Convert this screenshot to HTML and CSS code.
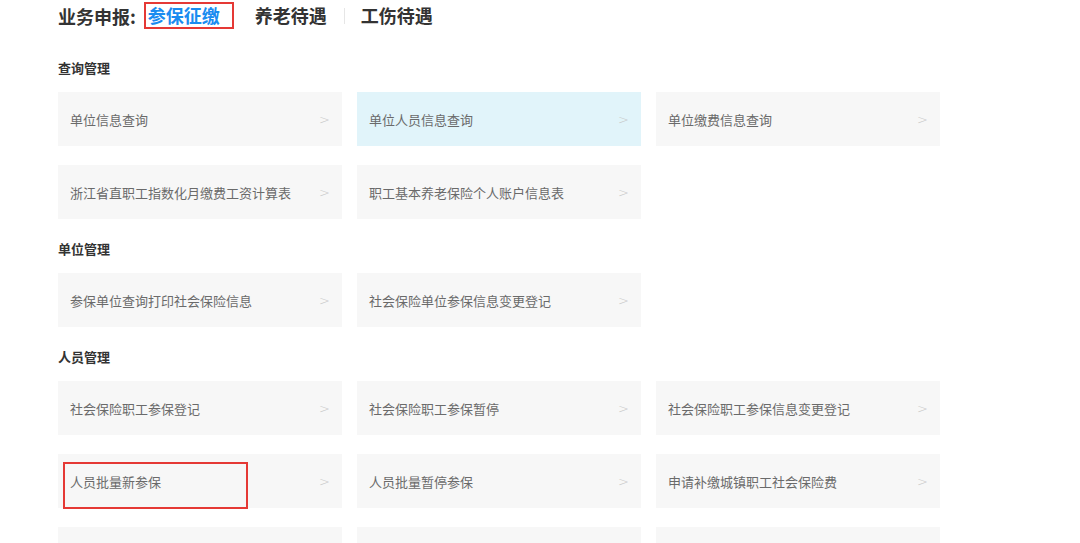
FILE: index.html
```html
<!DOCTYPE html>
<html lang="zh-CN">
<head>
    <meta charset="UTF-8">
    <meta name="viewport" content="width=device-width, initial-scale=1.0">
    <title>业务申报</title>
    <link rel="stylesheet" href="styles.css">
</head>
<body>
    <div class="container">
        <div class="tabs">
            <span class="tabs-label">业务申报:</span>
            <span class="tab active">参保征缴</span>
            <span class="tab">养老待遇</span>
            <span class="tab-sep"></span>
            <span class="tab">工伤待遇</span>
        </div>

        <!-- 查询管理 -->
        <div class="section">
            <h3 class="section-title">查询管理</h3>
            <div class="card-grid">
                <a class="card">单位信息查询<span class="arrow">&gt;</span></a>
                <a class="card card-hover">单位人员信息查询<span class="arrow">&gt;</span></a>
                <a class="card">单位缴费信息查询<span class="arrow">&gt;</span></a>
                <a class="card">浙江省直职工指数化月缴费工资计算表<span class="arrow">&gt;</span></a>
                <a class="card">职工基本养老保险个人账户信息表<span class="arrow">&gt;</span></a>
            </div>
        </div>

        <!-- 单位管理 -->
        <div class="section">
            <h3 class="section-title">单位管理</h3>
            <div class="card-grid">
                <a class="card">参保单位查询打印社会保险信息<span class="arrow">&gt;</span></a>
                <a class="card">社会保险单位参保信息变更登记<span class="arrow">&gt;</span></a>
            </div>
        </div>

        <!-- 人员管理 -->
        <div class="section">
            <h3 class="section-title">人员管理</h3>
            <div class="card-grid">
                <a class="card">社会保险职工参保登记<span class="arrow">&gt;</span></a>
                <a class="card">社会保险职工参保暂停<span class="arrow">&gt;</span></a>
                <a class="card">社会保险职工参保信息变更登记<span class="arrow">&gt;</span></a>
                <a class="card">人员批量新参保<span class="arrow">&gt;</span><span class="mark"></span></a>
                <a class="card">人员批量暂停参保<span class="arrow">&gt;</span></a>
                <a class="card">申请补缴城镇职工社会保险费<span class="arrow">&gt;</span></a>
                <a class="card">&nbsp;</a>
                <a class="card">&nbsp;</a>
                <a class="card">&nbsp;</a>
            </div>
        </div>
    </div>
</body>
</html>
```

FILE: styles.css
```css
* { box-sizing: border-box; }

body {
    font-family: "Microsoft YaHei", "Noto Sans CJK SC", "Noto Sans", sans-serif;
    margin: 0;
    background: #fff;
    color: #333;
}

.container {
    padding: 0 0 0 58px;
}

.tabs {
    display: flex;
    align-items: center;
    height: 30px;
    padding-top: 1px;
    font-size: 18px;
    font-weight: bold;
    color: #333;
}

.tabs-label {
    margin-right: 8px;
}

.tab {
    line-height: 23px;
    margin-right: 21px;
}

.tab.active {
    color: #1a8cf0;
    border: 2px solid #e53935;
    padding: 0 12px 0 2px;
}

.tab-sep {
    width: 1px;
    height: 16px;
    background: #e6e6e6;
    margin: 0 16px 0 -4px;
}

.section {
    margin-top: 28px;
}

.section + .section {
    margin-top: 20px;
}

.section-title {
    margin: 0 0 14px;
    font-size: 13px;
    line-height: 20px;
    font-weight: bold;
    color: #333;
}

.card-grid {
    display: grid;
    grid-template-columns: repeat(3, 284px);
    column-gap: 15px;
    row-gap: 19px;
}

.card {
    position: relative;
    display: flex;
    align-items: center;
    justify-content: space-between;
    height: 54px;
    padding: 0 12px;
    background: #f7f7f7;
    color: #6a6a6a;
    font-size: 13px;
    cursor: pointer;
}

.card-hover {
    background: #e1f4fa;
}

.arrow {
    color: #c8c8c8;
    font-family: "DejaVu Sans", sans-serif;
    font-size: 13px;
    font-weight: 300;
}

.mark {
    position: absolute;
    left: 5px;
    top: 8px;
    width: 185px;
    height: 47px;
    border: 2px solid #e53935;
}
```
